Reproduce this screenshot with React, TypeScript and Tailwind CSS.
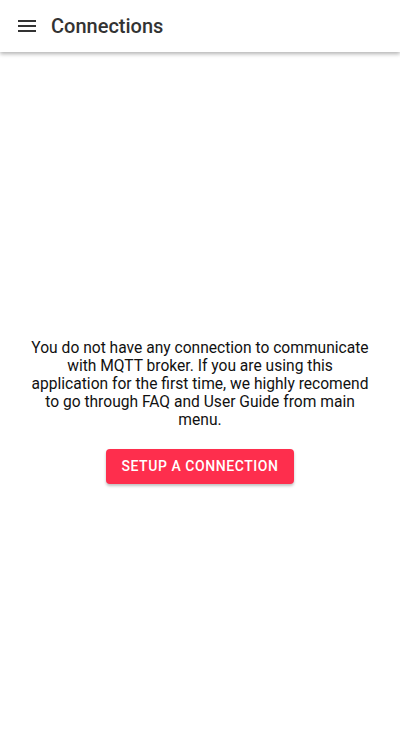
export default function App() {
  return (
    <div className="w-[400px] h-[750px] bg-white flex flex-col" style={{ fontFamily: 'Roboto, "Noto Sans", sans-serif' }}>
      <header className="h-[52px] flex items-center shadow-[0_2px_4px_rgba(0,0,0,0.3)] bg-white relative z-10">
        <div className="w-[51px] flex justify-center pl-[3px]">
          <svg width="24" height="24" viewBox="0 0 24 24" fill="#333">
            <path d="M3 18h18v-2H3v2zm0-5h18v-2H3v2zm0-7v2h18V6H3z" />
          </svg>
        </div>
        <h1 className="text-[20px] font-medium text-[#333] leading-none">Connections</h1>
      </header>
      <main className="flex-1 flex flex-col items-center pt-[287px]">
        <p className="text-[15.6px] leading-[18px] text-[#111] text-center px-[28px]">
          You do not have any connection to communicate with MQTT broker. If you are using this application for the first time, we highly recomend to go through FAQ and User Guide from main menu.
        </p>
        <button className="mt-[20px] h-[35px] px-[15px] rounded-[4px] bg-[#fe2e4d] text-white text-[14px] font-medium tracking-[0.04em] uppercase shadow-[0_2px_3px_rgba(0,0,0,0.25)]">
          Setup a connection
        </button>
      </main>
    </div>
  );
}
